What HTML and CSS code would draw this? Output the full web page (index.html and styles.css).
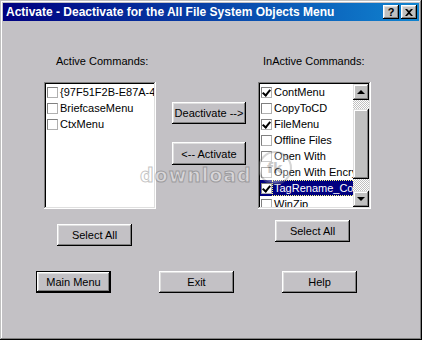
FILE: index.html
```html
<!DOCTYPE html>
<html lang="en">
<head>
    <meta charset="UTF-8">
    <title>Activate - Deactivate for the All File System Objects Menu</title>
    <link rel="stylesheet" href="styles.css">
</head>
<body>
    <div class="window">
        <div class="titlebar">
            <span class="title">Activate - Deactivate for the All File System Objects Menu</span>
            <div class="caption-buttons">
                <button class="cap-btn help-btn">?</button>
                <button class="cap-btn close-btn">
                    <svg width="8" height="7" viewBox="0 0 8 7"><path d="M0 0h2l2 2 2-2h2L5 3.5 8 7H6L4 5 2 7H0l3-3.5z" fill="#000"/></svg>
                </button>
            </div>
        </div>

        <div class="client">
            <div class="lists">
                <div class="label label-left">Active Commands:</div>
                <div></div>
                <div class="label label-right">InActive Commands:</div>

                <div class="listbox listbox-left">
                    <div class="items">
                        <div class="item"><span class="check"></span>{97F51F2B-E87A-4337-A2C1</div>
                        <div class="item"><span class="check"></span>BriefcaseMenu</div>
                        <div class="item"><span class="check"></span>CtxMenu</div>
                    </div>
                </div>
                <div class="mid">
                    <button class="btn">Deactivate --&gt;</button>
                    <button class="btn">&lt;-- Activate</button>
                </div>
                <div class="listbox">
                    <div class="items">
                        <div class="item"><span class="check checked"></span>ContMenu</div>
                        <div class="item"><span class="check"></span>CopyToCD</div>
                        <div class="item"><span class="check checked"></span>FileMenu</div>
                        <div class="item"><span class="check"></span>Offline Files</div>
                        <div class="item"><span class="check"></span>Open With</div>
                        <div class="item"><span class="check"></span>Open With Encryption</div>
                        <div class="item selected"><span class="check checked"></span><span class="focus">TagRename_Context</span></div>
                        <div class="item"><span class="check"></span>WinZip</div>
                    </div>
                    <div class="scrollbar">
                        <div class="arrow"><span class="tri up"></span></div>
                        <div class="track">
                            <div class="thumb"></div>
                        </div>
                        <div class="arrow"><span class="tri down"></span></div>
                    </div>
                </div>

                <div class="select-left"><button class="btn">Select All</button></div>
                <div></div>
                <div class="select-right"><button class="btn">Select All</button></div>
            </div>

            <div class="actions">
                <button class="btn default">Main Menu</button>
                <button class="btn">Exit</button>
                <button class="btn">Help</button>
            </div>
        </div>

        <div class="watermark">
            <span class="wm-text">download</span>
            <span class="wm-logo">fk</span>
        </div>
    </div>
</body>
</html>
```

FILE: styles.css
```css
* {
    box-sizing: border-box;
}
body {
    margin: 0;
    font-family: "Liberation Sans", Arial, sans-serif;
    font-size: 11px;
    background-color: #c0c0c0;
}
.window {
    position: relative;
    width: 422px;
    height: 340px;
    padding: 3px;
    background-color: #c3c1c5;
    box-shadow: inset -1px -1px #000, inset 1px 1px #c0c0c0, inset -2px -2px #808080, inset 2px 2px #fff;
}
.titlebar {
    height: 18px;
    display: flex;
    align-items: center;
    justify-content: space-between;
    padding: 0 2px 0 3px;
    background: linear-gradient(to right, #000080, #1084d0);
}
.title {
    color: #fff;
    font-weight: bold;
    font-size: 12px;
    white-space: nowrap;
}
.caption-buttons {
    display: flex;
    gap: 2px;
}
.cap-btn {
    width: 16px;
    height: 14px;
    padding: 0;
    border: none;
    display: flex;
    align-items: center;
    justify-content: center;
    font-family: "Liberation Sans", Arial, sans-serif;
    font-weight: bold;
    font-size: 11px;
    color: #000;
    background-color: #c0c0c0;
    box-shadow: inset -1px -1px #000, inset 1px 1px #fff, inset -2px -2px #808080, inset 2px 2px #dfdfdf;
}
.client {
    padding: 34px 0 0 41px;
}
.lists {
    display: grid;
    grid-template-columns: 128px 86px 113px;
}
.label {
    line-height: 13px;
    height: 27px;
    white-space: nowrap;
}
.label-left {
    padding-left: 12px;
}
.label-right {
    padding-left: 5px;
}
.listbox {
    height: 127px;
    display: flex;
    padding: 2px;
    background-color: #fff;
    box-shadow: inset -1px -1px #fff, inset 1px 1px #808080, inset -2px -2px #dfdfdf, inset 2px 2px #000;
}
.listbox-left {
    width: 112px;
}
.items {
    flex: 1;
    min-width: 0;
    overflow: hidden;
}
.item {
    height: 16px;
    display: flex;
    align-items: center;
    padding-left: 1px;
    white-space: nowrap;
}
.check {
    flex: none;
    width: 11px;
    height: 11px;
    margin-right: 2px;
    border: 1px solid #808080;
    border-right-color: #b0b0b0;
    border-bottom-color: #b0b0b0;
    background-color: #fff;
    position: relative;
}
.check.checked::after {
    content: "";
    position: absolute;
    left: 2px;
    top: 0px;
    width: 3px;
    height: 6px;
    border: solid #000;
    border-width: 0 2px 2px 0;
    transform: rotate(40deg);
}
.item.selected {
    background-color: #000080;
    color: #fff;
}
.focus {
    outline: 1px dotted #ffff80;
    outline-offset: 1px;
    overflow: hidden;
}
.scrollbar {
    width: 16px;
    flex: none;
    display: flex;
    flex-direction: column;
}
.arrow {
    height: 16px;
    flex: none;
    display: flex;
    align-items: center;
    justify-content: center;
    background-color: #c0c0c0;
    box-shadow: inset -1px -1px #000, inset 1px 1px #dfdfdf, inset -2px -2px #808080, inset 2px 2px #fff;
}
.tri {
    width: 0;
    height: 0;
    border-left: 4px solid transparent;
    border-right: 4px solid transparent;
}
.tri.up {
    border-bottom: 4px solid #000;
}
.tri.down {
    border-top: 4px solid #000;
}
.track {
    flex: 1;
    padding: 9px 0 12px;
    background: repeating-conic-gradient(#c0c0c0 0 25%, #fff 0 50%) 0 0 / 2px 2px;
}
.thumb {
    height: 100%;
    background-color: #c0c0c0;
    box-shadow: inset -1px -1px #000, inset 1px 1px #dfdfdf, inset -2px -2px #808080, inset 2px 2px #fff;
}
.mid {
    display: flex;
    flex-direction: column;
    gap: 18px;
    padding-top: 20px;
}
.btn {
    width: 75px;
    height: 22px;
    padding: 0;
    border: none;
    font-family: "Liberation Sans", Arial, sans-serif;
    font-size: 11px;
    color: #000;
    background-color: #c3c1c5;
    box-shadow: inset -1px -1px #000, inset 1px 1px #fff, inset -2px -2px #808080, inset 2px 2px #dfdfdf;
}
.mid .btn {
    width: 74px;
}
.mid .btn + .btn {
    height: 23px;
}
.btn.default {
    box-shadow: inset -1px -1px #000, inset 1px 1px #000, inset -2px -2px #000, inset 2px 2px #fff, inset -3px -3px #808080, inset 3px 3px #dfdfdf;
}
.select-left {
    padding: 15px 0 0 13px;
}
.select-right {
    padding: 11px 0 0 17px;
}
.actions {
    display: flex;
    gap: 48px;
    margin: 25px 0 0 -8px;
}
.watermark {
    position: absolute;
    left: 140px;
    top: 150px;
    display: flex;
    align-items: center;
    gap: 6px;
    opacity: 0.35;
    pointer-events: none;
}
.wm-text {
    font-family: "DejaVu Sans", sans-serif;
    font-weight: bold;
    font-size: 19px;
    color: #fff;
    -webkit-text-stroke: 1px #555;
    letter-spacing: 1px;
    margin-top: 14px;
}
.wm-logo {
    width: 34px;
    height: 34px;
    border-radius: 50%;
    border: 2px solid #888;
    background-color: #fff;
    color: #666;
    font-family: "DejaVu Sans", sans-serif;
    font-weight: bold;
    font-size: 14px;
    display: flex;
    align-items: center;
    justify-content: center;
}
```
